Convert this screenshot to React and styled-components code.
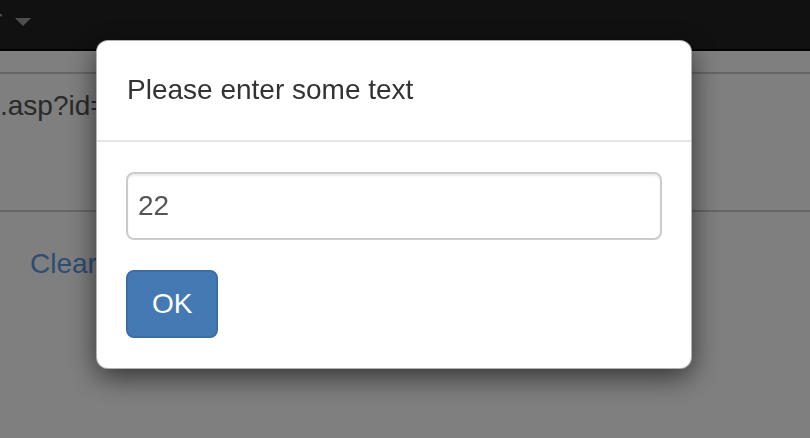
import React from "react";
import styled, { createGlobalStyle } from "styled-components";

const GlobalStyle = createGlobalStyle`
  html, body {
    margin: 0;
    padding: 0;
    background: #ffffff;
    overflow: hidden;
  }
  body {
    font-family: "Liberation Sans", Arial, Helvetica, sans-serif;
    color: #333333;
  }
  * { box-sizing: border-box; }
`;

const Page = styled.div`
  width: 810px;
  height: 438px;
  display: flex;
  flex-direction: column;
`;

const Navbar = styled.nav`
  height: 51px;
  background: #222222;
  border-bottom: 2px solid #080808;
  display: flex;
  align-items: flex-start;
  flex-shrink: 0;
`;

const NavToggle = styled.a`
  display: flex;
  align-items: center;
  margin-left: -7px;
  color: #9d9d9d;
  font-size: 28px;
  line-height: 40px;
  text-decoration: none;
`;

const Caret = styled.span`
  display: inline-block;
  width: 0;
  height: 0;
  margin-left: 13px;
  margin-top: 4px;
  border-top: 8px solid #9d9d9d;
  border-left: 8px solid transparent;
  border-right: 8px solid transparent;
`;

const Content = styled.main`
  padding-top: 21px;
  display: flex;
  flex-direction: column;
`;

const TableRow = styled.div`
  height: 140px;
  padding-top: 12px;
  border-top: 2px solid #cccccc;
  border-bottom: 2px solid #cccccc;
  font-size: 28px;
  line-height: 40px;
  color: #555555;
  white-space: nowrap;
`;

const Actions = styled.div`
  padding: 32px 0 0 30px;
  font-size: 28px;
  line-height: 40px;
`;

const Link = styled.a`
  color: #5a9ae8;
  text-decoration: none;
`;

const Backdrop = styled.div`
  position: fixed;
  inset: 0;
  background: rgba(0, 0, 0, 0.5);
`;

const Dialog = styled.div`
  position: absolute;
  top: 40px;
  left: 96px;
  width: 596px;
  background: #ffffff;
  border: 1px solid rgba(0, 0, 0, 0.3);
  border-radius: 12px;
  box-shadow: 0 8px 28px rgba(0, 0, 0, 0.6);
  display: flex;
  flex-direction: column;
`;

const DialogHeader = styled.div`
  padding: 29px 30px 30px;
  border-bottom: 2px solid #e5e5e5;
`;

const DialogTitle = styled.h4`
  margin: 0;
  font-size: 28px;
  line-height: 40px;
  font-weight: normal;
  color: #333333;
`;

const DialogBody = styled.div`
  padding: 30px 29px 30px;
  display: flex;
  flex-direction: column;
  align-items: flex-start;
  gap: 30px;
`;

const TextInput = styled.input`
  width: 100%;
  height: 68px;
  padding: 12px 10px;
  border: 2px solid #cccccc;
  border-radius: 8px;
  box-shadow: inset 0 2px 2px rgba(0, 0, 0, 0.075);
  font-family: inherit;
  font-size: 28px;
  line-height: 40px;
  color: #555555;
  background: #ffffff;
  outline: none;
`;

const PrimaryButton = styled.button`
  height: 68px;
  padding: 12px 24px;
  border: 2px solid #3a6ea5;
  border-radius: 8px;
  background: #4479b3;
  color: #ffffff;
  font-family: inherit;
  font-size: 28px;
  line-height: 40px;
  cursor: pointer;
`;

export default function App() {
  return (
    <>
      <GlobalStyle />
      <Page>
        <Navbar>
          <NavToggle href="#">
            r<Caret />
          </NavToggle>
        </Navbar>
        <Content>
          <TableRow>.asp?id=22</TableRow>
          <Actions>
            <Link href="#">Clear</Link>
          </Actions>
        </Content>
      </Page>
      <Backdrop>
        <Dialog role="dialog">
          <DialogHeader>
            <DialogTitle>Please enter some text</DialogTitle>
          </DialogHeader>
          <DialogBody>
            <TextInput defaultValue="22" />
            <PrimaryButton>OK</PrimaryButton>
          </DialogBody>
        </Dialog>
      </Backdrop>
    </>
  );
}
